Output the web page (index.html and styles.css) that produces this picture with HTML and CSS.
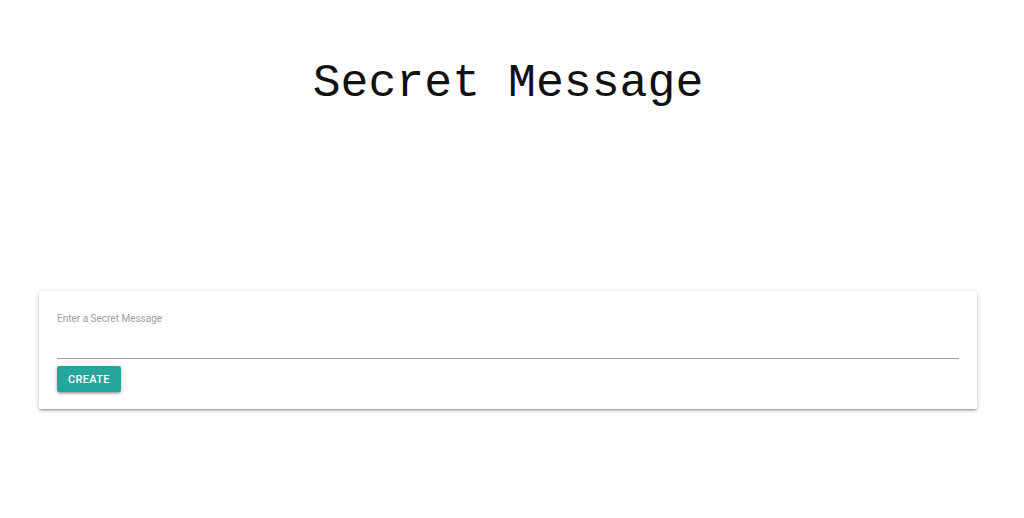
FILE: index.html
```html
<!DOCTYPE html>
<html>
<head>
<meta charset="utf-8">
<link rel="stylesheet" href="styles.css">
</head>
<body>
<header class="header">
  <h1 class="title">Secret Message</h1>
</header>
<main class="main">
  <div class="card">
    <label class="label" for="msg">Enter a Secret Message</label>
    <input class="input" id="msg" type="text">
    <button class="btn">CREATE</button>
  </div>
</main>
</body>
</html>
```
FILE: styles.css
```css
html, body {
  margin: 0;
  padding: 0;
  background: #fff;
}
body {
  font-family: Roboto, "Liberation Sans", sans-serif;
  width: 1024px;
  height: 518px;
  overflow: hidden;
}
.header {
  display: flex;
  justify-content: center;
  height: 291px;
  box-sizing: border-box;
  padding: 58px 8px 0 0;
}
.title {
  margin: 0;
  font-family: "Liberation Mono", "Courier New", monospace;
  font-weight: normal;
  font-size: 46.5px;
  line-height: 52px;
  color: #111;
}
.main {
  padding: 0 47px 0 39px;
}
.card {
  display: flex;
  flex-direction: column;
  align-items: flex-start;
  padding: 22px 18px 17px 18px;
  background: #fff;
  border-radius: 2px;
  box-shadow: 0 2px 2px 0 rgba(0,0,0,0.14), 0 3px 1px -2px rgba(0,0,0,0.12), 0 1px 5px 0 rgba(0,0,0,0.2);
}
.label {
  font-size: 10px;
  line-height: 12px;
  color: #9e9e9e;
}
.input {
  align-self: stretch;
  box-sizing: border-box;
  height: 34px;
  margin: 0 0 7px 0;
  padding: 0;
  border: none;
  border-bottom: 1px solid #9e9e9e;
  outline: none;
  background: transparent;
  font-size: 14px;
}
.btn {
  height: 26px;
  padding: 0 11px;
  border: none;
  border-radius: 2px;
  background: #26a69a;
  color: #fff;
  font-family: Roboto, "Liberation Sans", sans-serif;
  font-size: 11px;
  font-weight: 500;
  letter-spacing: 0.3px;
  box-shadow: 0 2px 2px 0 rgba(0,0,0,0.14), 0 3px 1px -2px rgba(0,0,0,0.12), 0 1px 5px 0 rgba(0,0,0,0.2);
  cursor: pointer;
}
```
